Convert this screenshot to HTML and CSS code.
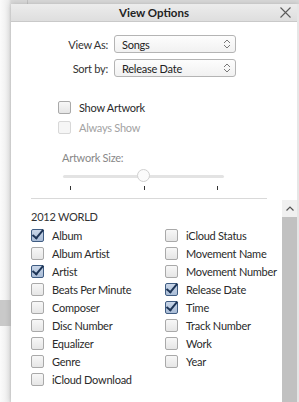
FILE: index.html
```html
<!DOCTYPE html>
<html lang="en">
<head>
    <meta charset="UTF-8">
    <title>View Options</title>
    <link rel="stylesheet" href="styles.css">
</head>
<body>
    <div class="backdrop-line"></div>
    <div class="backdrop-block"></div>

    <div class="window">
        <div class="titlebar">
            <span class="title">View Options</span>
            <svg class="close" width="11" height="11" viewBox="0 0 11 11">
                <path d="M0.5 0.5 L10.5 10.5 M10.5 0.5 L0.5 10.5" stroke="#5a5a5a" stroke-width="1.1" fill="none"/>
            </svg>
        </div>

        <div class="top">
            <div class="field">
                <label class="field-label">View As:</label>
                <div class="select">
                    <span>Songs</span>
                    <svg width="8" height="10" viewBox="0 0 8 10"><path d="M1 4 L4 1 L7 4 M1 6 L4 9 L7 6" stroke="#777" stroke-width="1" fill="none"/></svg>
                </div>
            </div>
            <div class="field">
                <label class="field-label">Sort by:</label>
                <div class="select">
                    <span>Release Date</span>
                    <svg width="8" height="10" viewBox="0 0 8 10"><path d="M1 4 L4 1 L7 4 M1 6 L4 9 L7 6" stroke="#777" stroke-width="1" fill="none"/></svg>
                </div>
            </div>

            <div class="artwork">
                <div class="check-row"><span class="box"></span>Show Artwork</div>
                <div class="check-row disabled"><span class="box"></span>Always Show</div>
            </div>

            <div class="size-label">Artwork Size:</div>
            <div class="slider">
                <div class="track"><span class="thumb"></span></div>
                <div class="ticks"><i></i><i></i><i></i></div>
            </div>
            <div class="separator"></div>
        </div>

        <div class="bottom">
            <div class="columns">
                <div class="group-title">2012 WORLD</div>
                <div class="grid">
                    <div class="check-row"><span class="box on"></span>Album</div>
                    <div class="check-row"><span class="box"></span>iCloud Status</div>
                    <div class="check-row"><span class="box"></span>Album Artist</div>
                    <div class="check-row"><span class="box"></span>Movement Name</div>
                    <div class="check-row"><span class="box on"></span>Artist</div>
                    <div class="check-row"><span class="box"></span>Movement Number</div>
                    <div class="check-row"><span class="box"></span>Beats Per Minute</div>
                    <div class="check-row"><span class="box on"></span>Release Date</div>
                    <div class="check-row"><span class="box"></span>Composer</div>
                    <div class="check-row"><span class="box on"></span>Time</div>
                    <div class="check-row"><span class="box"></span>Disc Number</div>
                    <div class="check-row"><span class="box"></span>Track Number</div>
                    <div class="check-row"><span class="box"></span>Equalizer</div>
                    <div class="check-row"><span class="box"></span>Work</div>
                    <div class="check-row"><span class="box"></span>Genre</div>
                    <div class="check-row"><span class="box"></span>Year</div>
                    <div class="check-row"><span class="box"></span>iCloud Download</div>
                </div>
            </div>
            <div class="scrollbar">
                <div class="scroll-up">
                    <svg width="8" height="5" viewBox="0 0 8 5"><path d="M0.5 4.5 L4 1 L7.5 4.5" stroke="#555" stroke-width="1.2" fill="none"/></svg>
                </div>
                <div class="scroll-thumb"></div>
            </div>
        </div>
    </div>
</body>
</html>
```

FILE: styles.css
```css
html, body {
    margin: 0;
    height: 100%;
    overflow: hidden;
}
body {
    font-family: Lato, "Noto Sans", sans-serif;
    font-size: 11px;
    letter-spacing: -0.25px;
    color: #2a2a2a;
    background: linear-gradient(to right, #fbfbfb, #ececec 9px, #dadada 11px);
    position: relative;
}
.backdrop-line {
    position: absolute;
    left: 27px;
    top: 0;
    width: 1px;
    height: 5px;
    background: #c4c4c4;
}
.backdrop-block {
    position: absolute;
    left: 0;
    top: 300px;
    width: 11px;
    height: 26px;
    background: #c9c9c9;
}
.window {
    position: relative;
    margin: 4px 0 0 11px;
    height: 398px;
    background: white;
    border-right: 2px solid #e6e6e6;
    box-shadow: 0 0 6px rgba(0,0,0,0.18);
    display: flex;
    flex-direction: column;
}
.titlebar {
    height: 17px;
    border-bottom: 1px solid #c9c9c9;
    background: linear-gradient(#ececec, #dedede);
    display: flex;
    align-items: center;
    justify-content: center;
    position: relative;
}
.title {
    font-weight: 700;
    font-size: 11.5px;
    letter-spacing: 0;
    color: #222;
}
.close {
    position: absolute;
    right: 6px;
    top: 3px;
}
.top {
    padding-top: 13px;
}
.field {
    display: flex;
    align-items: center;
    height: 18px;
    margin-bottom: 6px;
}
.field-label {
    width: 97px;
    text-align: right;
    margin-right: 6px;
    color: #333;
}
.select {
    height: 16px;
    width: 109px;
    border: 1px solid #b4b4b4;
    border-radius: 3px;
    background: linear-gradient(#fdfdfd, #f1f1f1);
    display: flex;
    align-items: center;
    justify-content: space-between;
    padding: 0 4px 0 7px;
    color: #222;
}
.select svg {
    display: block;
}
.artwork {
    padding: 14px 0 0 47px;
}
.check-row {
    display: flex;
    align-items: center;
    height: 20px;
    white-space: nowrap;
}
.box {
    width: 11px;
    height: 11px;
    border: 1px solid #a9a9a9;
    border-radius: 2px;
    background: linear-gradient(#f7f7f7, #e6e6e6);
    margin-right: 8px;
    flex-shrink: 0;
    position: relative;
}
.box.on {
    border-color: #3f5c82;
    background: linear-gradient(#c9d6e8, #a9bcd6);
}
.box.on::after {
    content: "";
    position: absolute;
    left: 3px;
    top: -3px;
    width: 4px;
    height: 10px;
    border: solid #1d3456;
    border-width: 0 2.5px 2.5px 0;
    transform: rotate(40deg);
}
.disabled {
    color: #a2a2a2;
}
.disabled .box {
    border-color: #d8d8d8;
    background: #f6f6f6;
}
.size-label {
    margin: 13px 0 0 51px;
    color: #888;
    height: 16px;
    line-height: 16px;
}
.slider {
    padding: 9px 0 0 52px;
    width: 161px;
}
.track {
    height: 3px;
    border-radius: 2px;
    background: #e3e3e3;
    position: relative;
}
.thumb {
    position: absolute;
    left: 74px;
    top: -6px;
    width: 13px;
    height: 13px;
    border-radius: 50%;
    border: 1px solid #d0d0d0;
    background: #fbfbfb;
    box-sizing: border-box;
}
.ticks {
    display: flex;
    justify-content: space-between;
    padding: 8px 6px 0 7px;
}
.ticks i {
    width: 1px;
    height: 4px;
    background: #333;
}
.separator {
    margin: 8px 0 0 20px;
    width: 236px;
    height: 1px;
    background: #d9d9d9;
}
.bottom {
    flex: 1;
    display: flex;
    padding-top: 1px;
}
.columns {
    flex: 1;
    padding: 9px 0 0 20px;
}
.group-title {
    height: 16px;
    line-height: 16px;
    color: #333;
    margin-bottom: 1px;
}
.grid {
    display: grid;
    grid-template-columns: 134px auto;
    grid-auto-rows: 18px;
}
.grid .check-row {
    height: 18px;
}
.scrollbar {
    width: 15px;
    display: flex;
    flex-direction: column;
}
.scroll-up {
    height: 17px;
    background: #f0f0f0;
    display: flex;
    align-items: center;
    justify-content: center;
}
.scroll-thumb {
    flex: 1;
    background: #c1c1c1;
}
```
